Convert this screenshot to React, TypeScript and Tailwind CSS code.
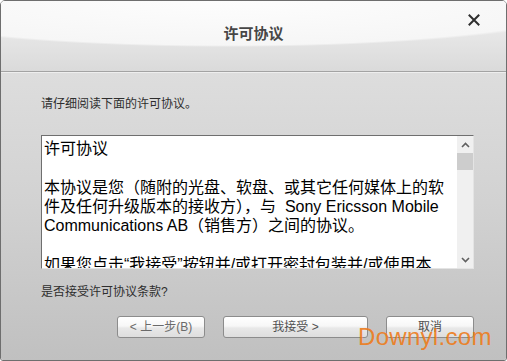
import React from "react";

const FONT = "font-['Liberation_Sans','Noto_Sans_CJK_SC',sans-serif]";

const CloseIcon: React.FC = () => (
  <svg width="12" height="12" viewBox="0 0 12 12">
    <path d="M1.5 1.5 L10.5 10.5 M10.5 1.5 L1.5 10.5" stroke="#2e2e2e" strokeWidth="2" strokeLinecap="square" />
  </svg>
);

const Chevron: React.FC<{ up?: boolean }> = ({ up }) => (
  <svg width="9" height="6" viewBox="0 0 9 6">
    <path d={up ? "M1 5 L4.5 1.5 L8 5" : "M1 1 L4.5 4.5 L8 1"} stroke="#606060" strokeWidth="1.6" fill="none" />
  </svg>
);

const lines = [
  "许可协议",
  "",
  "本协议是您（随附的光盘、软盘、或其它任何媒体上的软",
  "件及任何升级版本的接收方），与  Sony Ericsson Mobile",
  "Communications AB（销售方）之间的协议。",
  "",
  "如果您点击“我接受”按钮并/或打开密封包装并/或使用本",
];

const Button: React.FC<{ label: string; width: string; muted?: boolean }> = ({ label, width, muted }) => (
  <button
    className={`${width} h-[22px] rounded-[3px] border border-[#8c8c8c] bg-[linear-gradient(#ffffff,#f7f7f7_45%,#e8e8e8_55%,#dedede)] text-[12px] leading-[20px] ${muted ? "text-[#6a6a6a]" : "text-[#505050]"} shadow-[inset_0_1px_0_#ffffff]`}
  >
    {label}
  </button>
);

const App: React.FC = () => {
  return (
    <div className={`${FONT} w-[507px] h-[361px] flex flex-col border border-[#6e6e6e] rounded-t-[5px] rounded-b-[3px] overflow-hidden relative`}>
      {/* title bar */}
      <div className="relative h-[71px] shrink-0 border-b border-[#a3a3a3] bg-[radial-gradient(ellipse_75%_46px_at_45%_0%,#fdfdfd_0%,#f6f6f6_96%,transparent_100%),linear-gradient(#f2f2f2,#e6e6e6_50%,#dadada)]">
        <div className="pt-[22px] text-center text-[15px] leading-[22px] font-bold text-[#474747]">许可协议</div>
        <div className="absolute right-[26px] top-[13px]">
          <CloseIcon />
        </div>
      </div>

      {/* body */}
      <div className="flex-1 flex flex-col pl-[40px] pr-[32px] bg-[linear-gradient(#dddddd,#d2d2d2_45%,#c0c0c0)] border-t border-[#eeeeee]">
        <div className="mt-[23px] text-[12px] leading-[16px] text-[#2e2e2e]">请仔细阅读下面的许可协议。</div>

        <div className="mt-[23px] h-[134px] flex border-t border-l border-[#6f6f6f] border-r border-b border-r-[#e4e4e4] border-b-[#e4e4e4] bg-white">
          <div className="flex-1 overflow-hidden pl-[2px] pt-[3px] text-[16px] leading-[19.3px] text-black">
            {lines.map((l, i) => (
              <div key={i} className="whitespace-pre h-[19.3px]">
                {l}
              </div>
            ))}
          </div>
          <div className="w-[16px] flex flex-col bg-[#f0f0f0]">
            <div className="h-[17px] flex items-center justify-center">
              <Chevron up />
            </div>
            <div className="h-[17px] bg-[#cdcdcd]" />
            <div className="flex-1" />
            <div className="h-[17px] flex items-center justify-center">
              <Chevron />
            </div>
          </div>
        </div>

        <div className="mt-[15px] text-[12px] leading-[16px] text-[#2e2e2e]">是否接受许可协议条款?</div>

        <div className="mt-[16px] flex justify-end gap-[18px]">
          <Button label="< 上一步(B)" width="w-[88px]" muted />
          <Button label="我接受 >" width="w-[145px]" />
          <Button label="取消" width="w-[88px]" />
        </div>
      </div>

      {/* watermark */}
      <div className="absolute left-[357px] top-[324px] text-[24px] leading-none tracking-[0.3px] text-[#ee7a18]/90 font-['Liberation_Sans',sans-serif]">
        Downyl.com
      </div>
    </div>
  );
};

export default App;
